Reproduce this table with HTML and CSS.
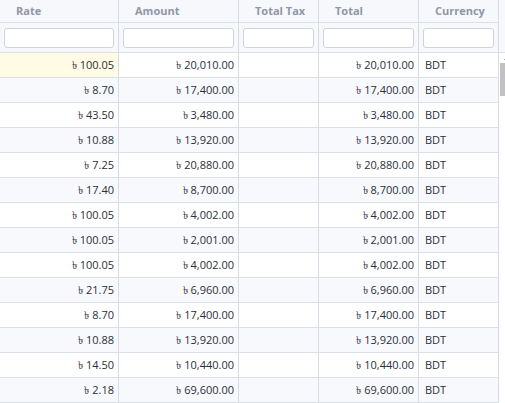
FILE: index.html
```html
<!DOCTYPE html>
<html>
<head>
<meta charset="utf-8">
<link rel="stylesheet" href="styles.css">
</head>
<body>
<div class="table">
  <div class="thead">
    <div class="hcell"><div class="title">Rate</div><div class="filter"><input type="text"></div></div>
    <div class="hcell"><div class="title">Amount</div><div class="filter"><input type="text"></div></div>
    <div class="hcell"><div class="title">Total Tax</div><div class="filter"><input type="text"></div></div>
    <div class="hcell"><div class="title">Total</div><div class="filter"><input type="text"></div></div>
    <div class="hcell"><div class="title">Currency</div><div class="filter"><input type="text"></div></div>
    <div class="hfill"></div>
  </div>
  <div class="tbody">
    <div class="rows">
      <div class="row"><div class="c num active">৳ 100.05</div><div class="c num">৳ 20,010.00</div><div class="c num"></div><div class="c num">৳ 20,010.00</div><div class="c">BDT</div></div>
      <div class="row"><div class="c num">৳ 8.70</div><div class="c num">৳ 17,400.00</div><div class="c num"></div><div class="c num">৳ 17,400.00</div><div class="c">BDT</div></div>
      <div class="row"><div class="c num">৳ 43.50</div><div class="c num">৳ 3,480.00</div><div class="c num"></div><div class="c num">৳ 3,480.00</div><div class="c">BDT</div></div>
      <div class="row"><div class="c num">৳ 10.88</div><div class="c num">৳ 13,920.00</div><div class="c num"></div><div class="c num">৳ 13,920.00</div><div class="c">BDT</div></div>
      <div class="row"><div class="c num">৳ 7.25</div><div class="c num">৳ 20,880.00</div><div class="c num"></div><div class="c num">৳ 20,880.00</div><div class="c">BDT</div></div>
      <div class="row"><div class="c num">৳ 17.40</div><div class="c num">৳ 8,700.00</div><div class="c num"></div><div class="c num">৳ 8,700.00</div><div class="c">BDT</div></div>
      <div class="row"><div class="c num">৳ 100.05</div><div class="c num">৳ 4,002.00</div><div class="c num"></div><div class="c num">৳ 4,002.00</div><div class="c">BDT</div></div>
      <div class="row"><div class="c num">৳ 100.05</div><div class="c num">৳ 2,001.00</div><div class="c num"></div><div class="c num">৳ 2,001.00</div><div class="c">BDT</div></div>
      <div class="row"><div class="c num">৳ 100.05</div><div class="c num">৳ 4,002.00</div><div class="c num"></div><div class="c num">৳ 4,002.00</div><div class="c">BDT</div></div>
      <div class="row"><div class="c num">৳ 21.75</div><div class="c num">৳ 6,960.00</div><div class="c num"></div><div class="c num">৳ 6,960.00</div><div class="c">BDT</div></div>
      <div class="row"><div class="c num">৳ 8.70</div><div class="c num">৳ 17,400.00</div><div class="c num"></div><div class="c num">৳ 17,400.00</div><div class="c">BDT</div></div>
      <div class="row"><div class="c num">৳ 10.88</div><div class="c num">৳ 13,920.00</div><div class="c num"></div><div class="c num">৳ 13,920.00</div><div class="c">BDT</div></div>
      <div class="row"><div class="c num">৳ 14.50</div><div class="c num">৳ 10,440.00</div><div class="c num"></div><div class="c num">৳ 10,440.00</div><div class="c">BDT</div></div>
      <div class="row"><div class="c num">৳ 2.18</div><div class="c num">৳ 69,600.00</div><div class="c num"></div><div class="c num">৳ 69,600.00</div><div class="c">BDT</div></div>
    </div>
    <div class="scrollbar">
      <div class="arrow"></div>
      <div class="thumb"></div>
    </div>
  </div>
</div>
</body>
</html>
```
FILE: styles.css
```css
html, body {
  margin: 0;
  padding: 0;
  background: #ffffff;
}
body {
  width: 505px;
  height: 403px;
  overflow: hidden;
  font-family: "Open Sans", "Noto Sans", "DejaVu Sans", sans-serif;
  font-size: 11px;
  color: #2a2f38;
}
.table {
  width: 505px;
  height: 403px;
  overflow: hidden;
}
.thead {
  display: grid;
  grid-template-columns: 119px 120px 80px 100px 80px 1fr;
  background: #f6f8fb;
  border-bottom: 1px solid #dbe0e7;
}
.hcell {
  border-right: 1px solid #d6dce4;
  display: flex;
  flex-direction: column;
}
.title {
  height: 22px;
  line-height: 22px;
  padding-left: 16px;
  font-weight: bold;
  color: #8f97a6;
  border-bottom: 1px solid #dbe0e7;
}
.filter {
  height: 29px;
  padding: 5px 4px 0 4px;
  box-sizing: border-box;
}
.filter input {
  display: block;
  width: 100%;
  height: 20px;
  box-sizing: border-box;
  margin: 0;
  border: 1px solid #cfd4db;
  border-radius: 3px;
  background: #ffffff;
  outline: none;
}
.tbody {
  display: flex;
}
.rows {
  width: 499px;
  flex: none;
}
.row {
  display: grid;
  grid-template-columns: 119px 120px 80px 100px 80px;
  height: 25px;
  border-bottom: 1px solid #dbe0e7;
  box-sizing: border-box;
}
.row:nth-child(even) {
  background: #f8f9fc;
}
.c {
  border-right: 1px solid #d6dce4;
  padding: 0 4px 0 6px;
  line-height: 24px;
  white-space: nowrap;
  overflow: hidden;
}
.num {
  text-align: right;
}
.active {
  background: #fffbe4;
}
.scrollbar {
  flex: none;
  width: 17px;
  height: 350px;
  background: #ffffff;
  position: relative;
}
.arrow {
  position: absolute;
  top: 4px;
  left: 5px;
  width: 0;
  height: 0;
  border-left: 3px solid transparent;
  border-right: 3px solid transparent;
  border-bottom: 3px solid #505050;
}
.thumb {
  position: absolute;
  top: 10px;
  left: 1px;
  width: 15px;
  height: 33px;
  background: #c1c1c1;
}
```
